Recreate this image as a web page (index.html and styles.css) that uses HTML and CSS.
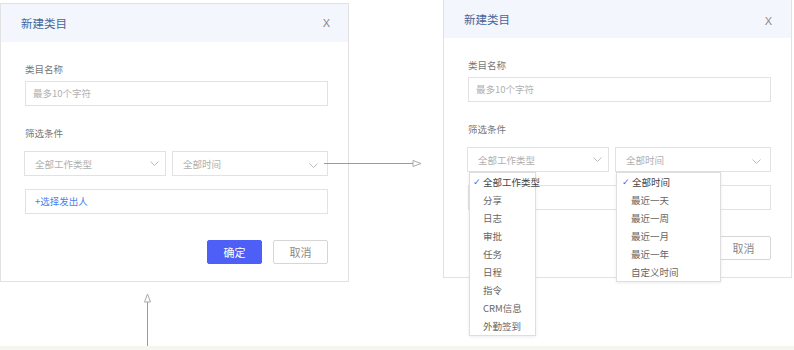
FILE: index.html
```html
<!DOCTYPE html>
<html lang="zh-CN">
<head>
    <meta charset="UTF-8">
    <meta name="viewport" content="width=device-width, initial-scale=1.0">
    <title>新建类目</title>
    <link rel="stylesheet" href="styles.css">
</head>
<body>
    <div class="stage">
        <!-- closed state -->
        <section class="dialog dialog-closed">
            <div class="dialog-header">
                <span class="dialog-title">新建类目</span>
                <span class="dialog-close">X</span>
            </div>
            <div class="dialog-body">
                <div class="field-label">类目名称</div>
                <div class="text-input">最多10个字符</div>

                <div class="field-label filter-label">筛选条件</div>
                <div class="select-row">
                    <div class="select">
                        <span>全部工作类型</span>
                        <svg class="chevron" width="9" height="5" viewBox="0 0 9 5"><polyline points="0.5,0.5 4.5,4.5 8.5,0.5" /></svg>
                    </div>
                    <div class="select">
                        <span>全部时间</span>
                        <svg class="chevron chevron-low" width="9" height="5" viewBox="0 0 9 5"><polyline points="0.5,0.5 4.5,4.5 8.5,0.5" /></svg>
                    </div>
                </div>

                <div class="text-input sender">+选择发出人</div>

                <div class="actions">
                    <button class="btn btn-primary">确定</button>
                    <button class="btn">取消</button>
                </div>
            </div>
        </section>

        <!-- open state -->
        <section class="dialog dialog-open">
            <div class="dialog-header">
                <span class="dialog-title">新建类目</span>
                <span class="dialog-close">X</span>
            </div>
            <div class="dialog-body">
                <div class="field-label">类目名称</div>
                <div class="text-input">最多10个字符</div>

                <div class="field-label filter-label">筛选条件</div>
                <div class="select-row">
                    <div class="select">
                        <span>全部工作类型</span>
                        <svg class="chevron" width="9" height="5" viewBox="0 0 9 5"><polyline points="0.5,0.5 4.5,4.5 8.5,0.5" /></svg>
                        <ul class="dropdown dropdown-type">
                            <li class="selected"><span class="tick">✓</span>全部工作类型</li>
                            <li>分享</li>
                            <li>日志</li>
                            <li>审批</li>
                            <li>任务</li>
                            <li>日程</li>
                            <li>指令</li>
                            <li>CRM信息</li>
                            <li>外勤签到</li>
                        </ul>
                    </div>
                    <div class="select">
                        <span>全部时间</span>
                        <svg class="chevron chevron-low" width="9" height="5" viewBox="0 0 9 5"><polyline points="0.5,0.5 4.5,4.5 8.5,0.5" /></svg>
                        <ul class="dropdown dropdown-time">
                            <li class="selected"><span class="tick">✓</span>全部时间</li>
                            <li>最近一天</li>
                            <li>最近一周</li>
                            <li>最近一月</li>
                            <li>最近一年</li>
                            <li>自定义时间</li>
                        </ul>
                    </div>
                </div>

                <div class="text-input sender"></div>

                <div class="actions">
                    <button class="btn btn-primary">确定</button>
                    <button class="btn">取消</button>
                </div>
            </div>
        </section>

        <svg class="arrows" width="794" height="350" viewBox="0 0 794 350">
            <line x1="324" y1="163.5" x2="413" y2="163.5" />
            <polygon points="413,160.5 421,163.5 413,166.5" />
            <line x1="147.5" y1="302" x2="147.5" y2="346" />
            <polygon points="144.5,302 147.5,294 150.5,302" />
        </svg>
    </div>
    <div class="page-strip"></div>
</body>
</html>
```

FILE: styles.css
```css
:root {
    --border-color: #e2e2e2;
    --header-background: #f3f6fc;
    --title-color: #46669a;
    --label-color: #777;
    --muted-color: #b0b0b0;
    --link-color: #4a7ef0;
    --primary-color: #4d5ff6;
}

* {
    box-sizing: border-box;
}

body {
    margin: 0;
    background: #fff;
    font-family: "Noto Sans CJK SC", "Noto Sans", sans-serif;
    color: var(--label-color);
    overflow: hidden;
}

.stage {
    position: relative;
    display: flex;
    align-items: flex-start;
    gap: 94px;
    height: 346px;
}

.dialog {
    position: relative;
    width: 349px;
    background: #fff;
    border: 1px solid var(--border-color);
}

.dialog-closed {
    margin-top: 3px;
}

.dialog-open {
    width: 349px;
    margin-top: -1px;
}

.dialog-header {
    display: flex;
    align-items: center;
    justify-content: space-between;
    height: 38px;
    padding: 0 18px 0 20px;
    background: var(--header-background);
}

.dialog-open .dialog-header {
    padding-top: 3px;
    padding-right: 19px;
}

.dialog-title {
    font-size: 11.5px;
    color: var(--title-color);
}

.dialog-open .dialog-title {
    margin-top: -3px;
}

.dialog-close {
    font-family: "Liberation Sans", sans-serif;
    font-size: 11px;
    color: #888;
}

.dialog-body {
    padding: 20px 20px 17px 24px;
}

.field-label {
    height: 14px;
    line-height: 14px;
    font-size: 9.5px;
    color: var(--label-color);
}

.filter-label {
    margin-top: 20px;
}

.text-input {
    height: 25px;
    margin-top: 5px;
    padding-left: 7px;
    border: 1px solid var(--border-color);
    line-height: 23px;
    font-size: 9.5px;
    color: var(--muted-color);
}

.sender {
    margin-top: 13px;
    padding-left: 9px;
    color: var(--link-color);
}

.select-row {
    display: grid;
    grid-template-columns: 142px 1fr;
    gap: 6px;
    margin-top: 11px;
    margin-left: -1px;
}

.select {
    position: relative;
    display: flex;
    align-items: center;
    justify-content: space-between;
    height: 25px;
    padding: 0 6px 0 10px;
    border: 1px solid var(--border-color);
    font-size: 9.5px;
    color: var(--muted-color);
}

.chevron polyline {
    fill: none;
    stroke: #bbb;
    stroke-width: 1;
}

.chevron-low {
    margin-top: 4px;
    margin-right: 3px;
}

.actions {
    display: flex;
    justify-content: flex-end;
    gap: 11px;
    margin-top: 26px;
}

.btn {
    width: 55px;
    height: 24px;
    padding: 0;
    border: 1px solid #d6d6d6;
    border-radius: 2px;
    background: #fff;
    font-family: inherit;
    font-size: 11px;
    color: #8a8a8a;
}

.btn-primary {
    border-color: var(--primary-color);
    background: var(--primary-color);
    color: #fff;
}

/* open dropdown menus */
.dropdown {
    position: absolute;
    top: calc(100% + 1px);
    z-index: 2;
    margin: 0;
    padding: 0;
    list-style: none;
    background: #fff;
    border: 1px solid #dedede;
    box-shadow: 0 1px 3px rgb(0 0 0 / 0.08);
}

.dropdown li {
    position: relative;
    height: 18px;
    line-height: 18px;
    font-size: 9.5px;
    color: #666;
    white-space: nowrap;
}

.dropdown li.selected {
    color: #444;
}

.tick {
    position: absolute;
    top: 0;
    font-family: "DejaVu Sans", sans-serif;
    font-size: 9px;
    color: #3e6de6;
}

.dropdown-type {
    left: 1px;
    width: 67px;
}

.dropdown-type li {
    padding-left: 13px;
}

.dropdown-type .tick {
    left: 3px;
}

.dropdown-time {
    left: 0;
    width: 105px;
}

.dropdown-time li {
    padding-left: 14px;
}

.dropdown-time li.selected {
    padding-left: 15px;
}

.dropdown-time .tick {
    left: 5px;
}

.arrows {
    position: absolute;
    top: 0;
    left: 0;
    pointer-events: none;
}

.arrows line {
    stroke: #9a9a9a;
    stroke-width: 1;
}

.arrows polygon {
    fill: #fff;
    stroke: #aaa;
    stroke-width: 1;
}

.page-strip {
    height: 4px;
    background: #f6f6f1;
}
```
